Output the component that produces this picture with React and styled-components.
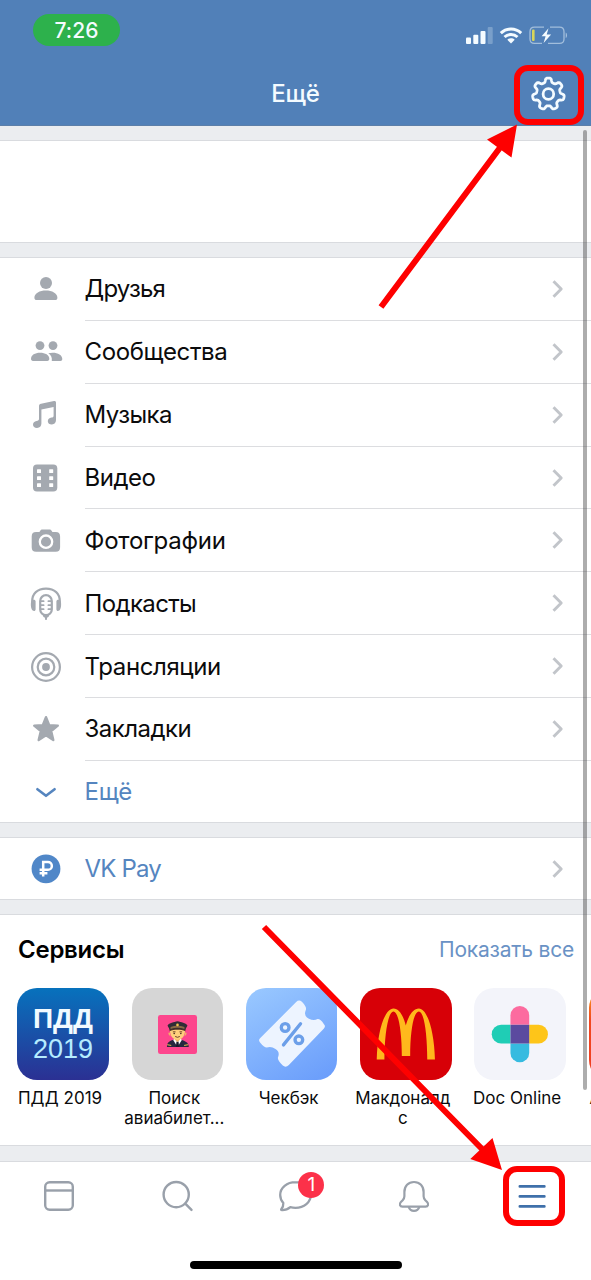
// Libraries
import React from 'react';

// Styles
import styled, { createGlobalStyle } from 'styled-components';

const GlobalStyle = createGlobalStyle`
  * { box-sizing: border-box; }
  body {
    margin: 0;
    background: #fff;
    font-family: Inter, "Noto Sans", sans-serif;
    color: #0b0b0c;
  }
  svg { display: block; overflow: visible; }
`;

const ScreenStyle = styled.div`
  position: relative;
  display: flex;
  flex-direction: column;
  width: 591px;
  height: 1280px;
  overflow: hidden;
  background: #fff;
`;

const HeaderStyle = styled.header`
  flex: none;
  display: flex;
  flex-direction: column;
  height: 126px;
  background: #5180b8;
  border-bottom: 1px solid #5c7fa9;
  color: #f4fbff;
`;

const StatusBarStyle = styled.div`
  display: flex;
  justify-content: space-between;
  height: 62px;
  padding: 14px 23px 0 33px;
`;

const ClockStyle = styled.div`
  width: 87px;
  height: 32px;
  border-radius: 16px;
  background: #2db14c;
  font-size: 21px;
  font-weight: 500;
  line-height: 33px;
  letter-spacing: 0.1px;
  text-align: center;
`;

const StatusIconsStyle = styled.div`
  padding-top: 12px;
`;

const NavBarStyle = styled.div`
  display: grid;
  grid-template-columns: 60px 1fr 60px;
  align-items: center;
  height: 64px;
`;

const TitleStyle = styled.h1`
  margin: 0;
  font-size: 24px;
  font-weight: 500;
  letter-spacing: -0.1px;
  text-align: center;
`;

const GapStyle = styled.div`
  flex: none;
  height: ${props => props.$height}px;
  background: #ebedf0;
  border-top: ${props => (props.$first ? 0 : 1)}px solid #d9dbdf;
  border-bottom: 1px solid #d9dbdf;
`;

const ProfileStyle = styled.section`
  flex: none;
  height: 101px;
`;

const MenuStyle = styled.nav`
  flex: none;
  display: flex;
  flex-direction: column;
  height: ${props => props.$height}px;
`;

const RowStyle = styled.a`
  flex: ${props => (props.$last ? '1' : '0 0 62.86px')};
  display: flex;
  padding-left: 30px;
  color: ${props => (props.$accent ? '#5585bf' : 'inherit')};
`;

const RowIconStyle = styled.div`
  display: flex;
  align-items: center;
  width: 54.6px;
  color: #a4a9b0;
`;

const RowBodyStyle = styled.div`
  flex: 1;
  display: flex;
  align-items: center;
  justify-content: space-between;
  padding-right: 28.5px;
  border-bottom: ${props => (props.$last ? 0 : 1)}px solid #dcdde0;
`;

const RowLabelStyle = styled.span`
  padding-top: 1px;
  font-size: 24px;
  line-height: 30px;
  letter-spacing: ${props => props.$spacing}px;
`;

const ServicesStyle = styled.section`
  flex: none;
  height: 230px;
  overflow: hidden;
`;

const ServicesHeaderStyle = styled.div`
  display: flex;
  justify-content: space-between;
  align-items: center;
  height: 68px;
  padding: 0 17px 0 18px;
`;

const ServicesTitleStyle = styled.h2`
  margin: 0;
  font-size: 24px;
  font-weight: 600;
  letter-spacing: -0.25px;
  color: #000;
`;

const ShowAllStyle = styled.a`
  padding-top: 1px;
  font-size: 21px;
  letter-spacing: -0.2px;
  color: #6a92c5;
`;

const ServiceListStyle = styled.div`
  display: flex;
  width: 720px;
  gap: 4.3px;
  padding: 5px 0 0 8px;
`;

const ServiceStyle = styled.div`
  display: flex;
  flex-direction: column;
  align-items: center;
  width: 110px;
`;

const TileStyle = styled.div`
  display: flex;
  flex-direction: column;
  align-items: center;
  justify-content: center;
  width: 91.5px;
  height: 92px;
  border-radius: 20px;
  overflow: hidden;
  background: ${props => props.$background};
`;

const TileTitleStyle = styled.div`
  font-family: "Liberation Sans", Arial, sans-serif;
  font-size: 28px;
  font-weight: 700;
  line-height: 31px;
  color: #f2fbff;
`;

const TileYearStyle = styled.div`
  font-family: "Liberation Sans", Arial, sans-serif;
  font-size: 27px;
  line-height: 31px;
  color: #b5ecff;
`;

const ServiceLabelStyle = styled.div`
  padding: 8px 6px 0 0;
  font-size: 17px;
  line-height: 20px;
  text-align: center;
  white-space: pre;
`;

const TabBarStyle = styled.footer`
  flex: 1;
  display: flex;
  flex-direction: column;
  align-items: center;
`;

const TabsStyle = styled.div`
  display: grid;
  grid-template-columns: repeat(5, 1fr);
  width: 591px;
  height: 99px;
  padding-top: 17px;
`;

const TabStyle = styled.div`
  display: flex;
  justify-content: center;
  align-items: flex-start;
  color: ${props => (props.$active ? '#3f70aa' : '#99a0aa')};
`;

const TabIconStyle = styled.div`
  position: relative;
`;

const BadgeStyle = styled.span`
  position: absolute;
  top: -7px;
  left: 20px;
  width: 26px;
  height: 26px;
  border-radius: 13px;
  background: #fc3149;
  color: #fff;
  font-size: 19px;
  line-height: 26px;
  text-align: center;
`;

const HomeIndicatorStyle = styled.div`
  width: 212px;
  height: 8px;
  border-radius: 4px;
  background: #000;
`;

const ScrollThumbStyle = styled.div`
  position: absolute;
  top: 130px;
  right: 4px;
  width: 4px;
  height: 960px;
  border-radius: 2px;
  background: rgba(60, 60, 60, 0.42);
`;

const MarksStyle = styled.svg`
  position: absolute;
  top: 0;
  left: 0;
`;

// Icons
const Icon = ({ size = 32, children }) => (
  <svg width={size} height={size} viewBox={`0 0 ${size} ${size}`} fill="none">
    {children}
  </svg>
);

const FriendIcon = () => (
  <Icon>
    <g fill="currentColor">
      <circle cx="16" cy="10" r="6" />
      <path d="M4.4 24.8c0-4.6 5.4-7.2 11.5-7.2s11.5 2.6 11.5 7.2c0 1.5-.9 2.300-2.300 2.300H6.700c-1.400 0-2.300-.8-2.300-2.300z" />
    </g>
  </Icon>
);

const GroupsIcon = () => (
  <Icon>
    <g fill="currentColor">
      <circle cx="10" cy="9.6" r="4.4" />
      <circle cx="23" cy="9.6" r="4.4" />
      <path d="M1 22.8c0-3.8 4-6 9.1-6s9.2 2.2 9.2 6c0 1.3-.7 2.2-2 2.2H3c-1.300 0-2-.9-2-2.200z" />
      <path d="M18.3 17.3c1.200-.4 2.800-.6 4.400-.6 5.300 0 9.600 2.400 9.600 6.300 0 1.300-.7 2-1.900 2h-8.600c.4-3.300-.6-5.800-3.500-7.700z" />
    </g>
  </Icon>
);

const MusicIcon = () => (
  <Icon>
    <path
      fill="currentColor"
      d="M9 7.200c0-1.500.7-2.300 2-2.500l13-2.700c1.200-.2 2 .4 2 1.600v17.400c0 2.600-1.600 4.400-4 4.500-2.400.1-4.200-1.200-4.200-3.300 0-2 1.500-3.200 3.600-3.600 1.600-.3 2.200-.8 2.200-2.200V8L11.400 10.500v14c0 2.500-1.700 4.400-4.300 4.400-2.400.1-4.100-1.200-4.100-3.200s1.400-3.200 3.500-3.600c1.700-.4 2.500-.9 2.500-2.400z"
    />
  </Icon>
);

const VideoIcon = () => (
  <Icon>
    <rect x="3" y="2.5" width="24.300" height="27" rx="4" fill="currentColor" />
    {[7.2, 14.2, 21.2].map(y => (
      <g key={y} fill="#fff">
        <rect x="7" y={y} width="4" height="3.8" rx=".5" />
        <rect x="19.2" y={y} width="4" height="3.8" rx=".5" />
      </g>
    ))}
  </Icon>
);

const PhotoIcon = () => (
  <Icon>
    <path
      fill="currentColor"
      d="M10.200 5.800c.6-.9 1.200-1.300 2.200-1.300h7c1 0 1.700.4 2.200 1.300l.8 1.200h3.300c3 0 4.400 1.400 4.400 4.400v10.900c0 3-1.400 4.500-4.400 4.500H6.100c-3 0-4.400-1.500-4.400-4.500V11.400c0-3 1.400-4.400 4.400-4.400h3.300z"
    />
    <circle cx="16" cy="16.7" r="6.2" stroke="#fff" strokeWidth="2.3" />
  </Icon>
);

const PodcastIcon = () => (
  <Icon>
    <path
      d="M2.300 14C1.600 5.500 7.800.6 16 .6s14.400 4.900 13.700 13.400"
      stroke="currentColor"
      strokeWidth="2.2"
    />
    <g fill="currentColor">
      <path d="M1.600 12.300c1.700-1 4-.8 4 1v8c0 1.800-1.600 2.200-2.900 1.300C.6 21 .4 14.600 1.600 12.300zM30.400 12.300c-1.700-1-4-.8-4 1v8c0 1.800 1.600 2.200 2.900 1.300 2.100-1.600 2.300-8 1.100-10.300z" />
      <path d="M12.800 26.800h6.400c0 1.700-.8 2.500-2 2.700l-.5 2.600h-1.400l-.5-2.600c-1.200-.2-2-1-2-2.700z" />
    </g>
    <rect x="10.200" y="7.2" width="11.6" height="20" rx="5.800" stroke="currentColor" strokeWidth="2.2" />
    <path
      d="M11 13.200h2.600M11 17.200h2.600M11 21.200h2.600M21 13.200h-2.600M21 17.200h-2.600M21 21.200h-2.600"
      stroke="currentColor"
      strokeWidth="1.8"
      strokeLinecap="round"
    />
  </Icon>
);

const LiveIcon = () => (
  <Icon>
    <g stroke="currentColor" strokeWidth="2.2">
      <circle cx="16" cy="16" r="13.9" />
      <circle cx="16" cy="16" r="8.3" />
    </g>
    <circle cx="16" cy="16" r="3.9" fill="currentColor" />
  </Icon>
);

const BookmarkIcon = () => (
  <Icon>
    <path
      d="M16 4.200l3.200 7.900 8.600.6-6.600 5.500 2.100 8.900L16 22.300l-7.300 4.800 2.100-8.900-6.600-5.500 8.600-.6z"
      fill="currentColor"
      stroke="currentColor"
      strokeWidth="2.4"
      strokeLinejoin="round"
    />
  </Icon>
);

const ExpandIcon = () => (
  <Icon>
    <path
      d="M7.400 14.200L16 20.800l8.600-6.600"
      stroke="#5585bf"
      strokeWidth="2.6"
      strokeLinecap="round"
      strokeLinejoin="round"
    />
  </Icon>
);

const PayIcon = () => (
  <Icon>
    <circle cx="16" cy="15.8" r="14.4" fill="#5087c8" />
    <path
      d="M13.200 23.600V9.100h4.800a3.800 3.800 0 0 1 0 7.700H9.600M9.600 20.300h7.800"
      stroke="#fff"
      strokeWidth="2.5"
    />
  </Icon>
);

const Chevron = () => (
  <svg width="11" height="18" viewBox="0 0 11 18" fill="none">
    <path d="M1.500 1.200L9.200 9l-7.700 7.800" stroke="#c2c5ca" strokeWidth="2.9" strokeLinejoin="round" />
  </svg>
);

// cog outline as a seven-lobed flattened wave around the center
const cogPath = (() => {
  const points = [];
  for (let i = 0; i < 210; i += 1) {
    const a = (i / 210) * Math.PI * 2;
    const r = 13.9 + 2.1 * Math.tanh(2.2 * Math.cos(7 * a));
    points.push(`${(17.4 + r * Math.sin(a)).toFixed(2)} ${(19 - r * Math.cos(a)).toFixed(2)}`);
  }
  return `M${points.join('L')}Z`;
})();

const SettingsIcon = () => (
  <Icon size={36}>
    <g stroke="#f4fbff" strokeWidth="2.8" strokeLinejoin="round">
      <path d={cogPath} />
      <circle cx="17.4" cy="19" r="5.3" />
    </g>
  </Icon>
);

const StatusIcons = () => (
  <svg width="102" height="19" viewBox="0 0 102 19" fill="none">
    <g fill="#f4fbff">
      <rect x="0" y="11.5" width="5" height="6.5" rx="1" />
      <rect x="7.3" y="8.7" width="5" height="9.3" rx="1" />
      <rect x="14.5" y="5" width="5" height="13" rx="1" />
      <rect x="21.7" y="1" width="5" height="17" rx="1" opacity=".25" />
      <path d="M45 17.400l-3.700-3.700c2-1.900 5.400-1.900 7.400 0z" />
    </g>
    <g stroke="#f4fbff" strokeWidth="3">
      <path d="M34.800 7.200c5.800-5.500 14.600-5.500 20.400 0" />
      <path d="M38.500 11c3.700-3.500 9.300-3.500 13 0" />
    </g>
    <path
      d="M78 1.200H68.500c-2.800 0-4.500 1.700-4.500 4.500v7.200c0 2.800 1.700 4.500 4.500 4.500H76M84 1.200h9.500c2.800 0 4.500 1.700 4.500 4.500v7.200c0 2.800-1.700 4.500-4.500 4.500H82"
      stroke="#f4fbff"
      strokeOpacity=".5"
      strokeWidth="1.3"
    />
    <path d="M99.700 6.500c1.800.6 1.800 5 0 5.600z" fill="#f4fbff" fillOpacity=".5" />
    <rect x="66" y="3.5" width="2.6" height="11.5" rx="1" fill="#d8d65a" />
    <path d="M82.500 2.300L75.600 10.300h4l-2 6.700 7.500-8.600h-4.400z" fill="#f4fbff" />
  </svg>
);

const FeedIcon = () => (
  <Icon size={34}>
    <g stroke="currentColor" strokeWidth="2.4">
      <rect x="3.2" y="3.2" width="27.6" height="27.6" rx="4.5" />
      <path d="M3.200 11.500h27.600" />
    </g>
  </Icon>
);

const SearchIcon = () => (
  <Icon size={34}>
    <g stroke="currentColor" strokeWidth="2.4" strokeLinecap="round">
      <circle cx="16.2" cy="15.6" r="12.6" />
      <path d="M25.300 24.700l6.200 6.200" />
    </g>
  </Icon>
);

const MessagesIcon = () => (
  <Icon size={34}>
    <path
      d="M17.500 3.200C8.900 3.200 2.200 8.800 2.200 16c0 3.100 1.100 5.700 3.100 8 .2 2.600-.7 4.700-2 6.100-.4.600-.1 1 .6 1 3.700.1 6.300-1.100 8.400-2.900 1.700.4 3.300.6 5.200.6 8.600 0 15.300-5.600 15.300-12.800S26.100 3.200 17.500 3.200z"
      stroke="currentColor"
      strokeWidth="2.3"
      strokeLinejoin="round"
    />
  </Icon>
);

const BellIcon = () => (
  <Icon size={34}>
    <g stroke="currentColor" strokeWidth="2.2" strokeLinejoin="round">
      <path d="M17 3c-5.800 0-9.600 4.300-9.600 10v4.300c0 1.700-.5 2.600-1.700 3.900l-1.800 1.900c-1.900 2-1 4.600 1.500 4.600h23.200c2.500 0 3.400-2.600 1.500-4.600l-1.800-1.900c-1.200-1.300-1.700-2.200-1.700-3.900V13c0-5.700-3.800-10-9.600-10z" />
      <path d="M11.700 27.900c.8 2.600 2.800 4 5.300 4s4.500-1.400 5.300-4" />
    </g>
  </Icon>
);

const MoreIcon = () => (
  <Icon size={34}>
    <path
      d="M4.800 7.400h24.600M4.800 17.400h24.600M4.800 27.400h24.600"
      stroke="currentColor"
      strokeWidth="2.6"
      strokeLinecap="round"
    />
  </Icon>
);

// Service logos
const PilotLogo = () => (
  <svg width="39" height="39" viewBox="0 0 118 118">
    <rect width="118" height="118" rx="7" fill="#fd468d" />
    <path d="M27 97c0-15 8-19 22-23h18c14 4 26 8 26 23z" fill="#27273f" />
    <path d="M46 76l13 21 13-21-6-8H52z" fill="#fff" />
    <path d="M56 80h6l2 17H54z" fill="#1b1b2c" />
    <path d="M50 62h17v12l-8 8-9-8z" fill="#efb365" />
    <path d="M36 40h46c1 22-8 35-23 35S35 62 36 40z" fill="#ffcf7c" />
    <path d="M36 54c-7-5-5 8 2 10zM82 54c7-5 5 8-2 10z" fill="#efb365" />
    <path d="M35 36h48v13c-14-6-34-6-48 0z" fill="#4b3025" />
    <path d="M29 31c5-7 19-9 30-12 11 3 25 5 30 12-1 6-5 8-6 14-15-6-33-6-48 0-1-6-5-8-6-14z" fill="#302d36" />
    <path d="M38 36c14-5 28-5 42 0v6c-14-5-28-5-42 0z" fill="#8a6a43" />
    <circle cx="59" cy="30" r="4" fill="#f5c34c" />
    <path d="M45 51h8M65 51h8M52 65q7 5 14 0" stroke="#6c4126" strokeWidth="3" fill="none" />
    <circle cx="49" cy="56" r="2.5" fill="#4b3025" />
    <circle cx="69" cy="56" r="2.5" fill="#4b3025" />
    <path d="M28 90l12 2M91 90l-12 2" stroke="#f5c34c" strokeWidth="3" />
  </svg>
);

const TicketLogo = () => (
  <svg width="92" height="92" viewBox="48 40 275 275" fill="none">
    <path
      d="M198 82Q206 74 215 81Q232 98 226 108Q220 124 236 132Q250 139 262 133Q270 132 281 148Q287 154 281 161L176 270Q167 279 158 272Q140 255 144 246Q150 230 136 222Q124 214 110 218Q102 218 90 203Q84 196 90 190Z"
      fill="#edf4ff"
    />
    <g stroke="#6c9fe9" strokeWidth="10" strokeLinecap="round">
      <circle cx="165" cy="158" r="11.5" />
      <circle cx="206" cy="195" r="11.5" />
      <path d="M211 147l-51 63" />
    </g>
  </svg>
);

const ArchesLogo = () => (
  <svg width="92" height="92" viewBox="390 40 275 275">
    <path
      d="M440 254C442 165 465 101 490 101C508 101 520 125 527 152C534 125 548 101 566 101C590 101 612 165 614 254L591 254C591 180 582 110 566 110C550 110 540 170 540 243L515 243C515 170 505 110 490 110C474 110 463 180 463 254Z"
      fill="#ffb81c"
    />
  </svg>
);

const DocLogo = () => (
  <svg width="92" height="92" viewBox="103 265 275 275">
    <path d="M212 375v-28a28 28 0 0 1 56 0v28z" fill="#fc6b9f" />
    <path d="M212 375h-28a28 28 0 0 0 0 56h28z" fill="#1fcdb5" />
    <path d="M268 375h28a28 28 0 0 1 0 56h-28z" fill="#fec519" />
    <path d="M212 431v28a28 28 0 0 0 56 0v-28z" fill="#36bbe0" />
    <rect x="212" y="375" width="56" height="56" fill="#5b4a9f" />
  </svg>
);

// Components
const Row = ({ icon, label, spacing = 0, accent, last, chevron = true }) => (
  <RowStyle $accent={accent} $last={last}>
    <RowIconStyle>{icon}</RowIconStyle>
    <RowBodyStyle $last={last}>
      <RowLabelStyle $spacing={spacing}>{label}</RowLabelStyle>
      {chevron && <Chevron />}
    </RowBodyStyle>
  </RowStyle>
);

const Service = ({ background, label, children }) => (
  <ServiceStyle>
    <TileStyle $background={background}>{children}</TileStyle>
    <ServiceLabelStyle>{label}</ServiceLabelStyle>
  </ServiceStyle>
);

const Tab = ({ active, badge, children }) => (
  <TabStyle $active={active}>
    <TabIconStyle>
      {children}
      {badge && <BadgeStyle>{badge}</BadgeStyle>}
    </TabIconStyle>
  </TabStyle>
);

const Marks = () => (
  <MarksStyle width="591" height="1280" viewBox="0 0 591 1280" fill="none">
    <g stroke="#fe0000" strokeWidth="6">
      <rect x="517" y="68" width="64" height="54" rx="11" />
      <rect x="506" y="1169" width="56" height="54" rx="11" />
      <path d="M381 307L502 145M264 927L484 1151" />
    </g>
    <path d="M517 124.500L487 139.500L511.500 157.500ZM502 1170L492.500 1138L470.300 1159Z" fill="#fe0000" />
  </MarksStyle>
);

const menu = [
  { label: 'Друзья', spacing: -0.85, icon: <FriendIcon /> },
  { label: 'Сообщества', spacing: -0.4, icon: <GroupsIcon /> },
  { label: 'Музыка', spacing: -0.6, icon: <MusicIcon /> },
  { label: 'Видео', spacing: -0.5, icon: <VideoIcon /> },
  { label: 'Фотографии', spacing: -0.25, icon: <PhotoIcon /> },
  { label: 'Подкасты', spacing: -0.65, icon: <PodcastIcon /> },
  { label: 'Трансляции', spacing: -0.4, icon: <LiveIcon /> },
  { label: 'Закладки', spacing: -0.55, icon: <BookmarkIcon /> }
];

const App = () => (
  <ScreenStyle>
    <GlobalStyle />
    <HeaderStyle>
      <StatusBarStyle>
        <ClockStyle>7:26</ClockStyle>
        <StatusIconsStyle>
          <StatusIcons />
        </StatusIconsStyle>
      </StatusBarStyle>
      <NavBarStyle>
        <span />
        <TitleStyle>Ещё</TitleStyle>
        <SettingsIcon />
      </NavBarStyle>
    </HeaderStyle>
    <GapStyle $height={15} $first />
    <ProfileStyle />
    <GapStyle $height={16} />
    <MenuStyle $height={564}>
      {menu.map(item => (
        <Row key={item.label} {...item} />
      ))}
      <Row label="Ещё" spacing={-0.3} icon={<ExpandIcon />} accent last chevron={false} />
    </MenuStyle>
    <GapStyle $height={16} />
    <MenuStyle $height={61}>
      <Row label="VK Pay" spacing={-0.85} icon={<PayIcon />} accent last />
    </MenuStyle>
    <GapStyle $height={16} />
    <ServicesStyle>
      <ServicesHeaderStyle>
        <ServicesTitleStyle>Сервисы</ServicesTitleStyle>
        <ShowAllStyle>Показать все</ShowAllStyle>
      </ServicesHeaderStyle>
      <ServiceListStyle>
        <Service background="linear-gradient(#0772bd, #2b3093)" label="ПДД 2019">
          <TileTitleStyle>ПДД</TileTitleStyle>
          <TileYearStyle>2019</TileYearStyle>
        </Service>
        <Service background="#d6d6d6" label={'Поиск\nавиабилет...'}>
          <PilotLogo />
        </Service>
        <Service background="linear-gradient(150deg, #9ac9ff, #689bfb)" label="Чекбэк">
          <TicketLogo />
        </Service>
        <Service background="#d70007" label={'Макдоналд\nс'}>
          <ArchesLogo />
        </Service>
        <Service background="#f3f4fa" label="Doc Online">
          <DocLogo />
        </Service>
        <Service background="linear-gradient(#f8a31b, #f2471f 35%, #ee3d22)" label="AliExpress" />
      </ServiceListStyle>
    </ServicesStyle>
    <GapStyle $height={17} />
    <TabBarStyle>
      <TabsStyle>
        <Tab><FeedIcon /></Tab>
        <Tab><SearchIcon /></Tab>
        <Tab badge="1"><MessagesIcon /></Tab>
        <Tab><BellIcon /></Tab>
        <Tab active><MoreIcon /></Tab>
      </TabsStyle>
      <HomeIndicatorStyle />
    </TabBarStyle>
    <ScrollThumbStyle />
    <Marks />
  </ScreenStyle>
);

export default App;
